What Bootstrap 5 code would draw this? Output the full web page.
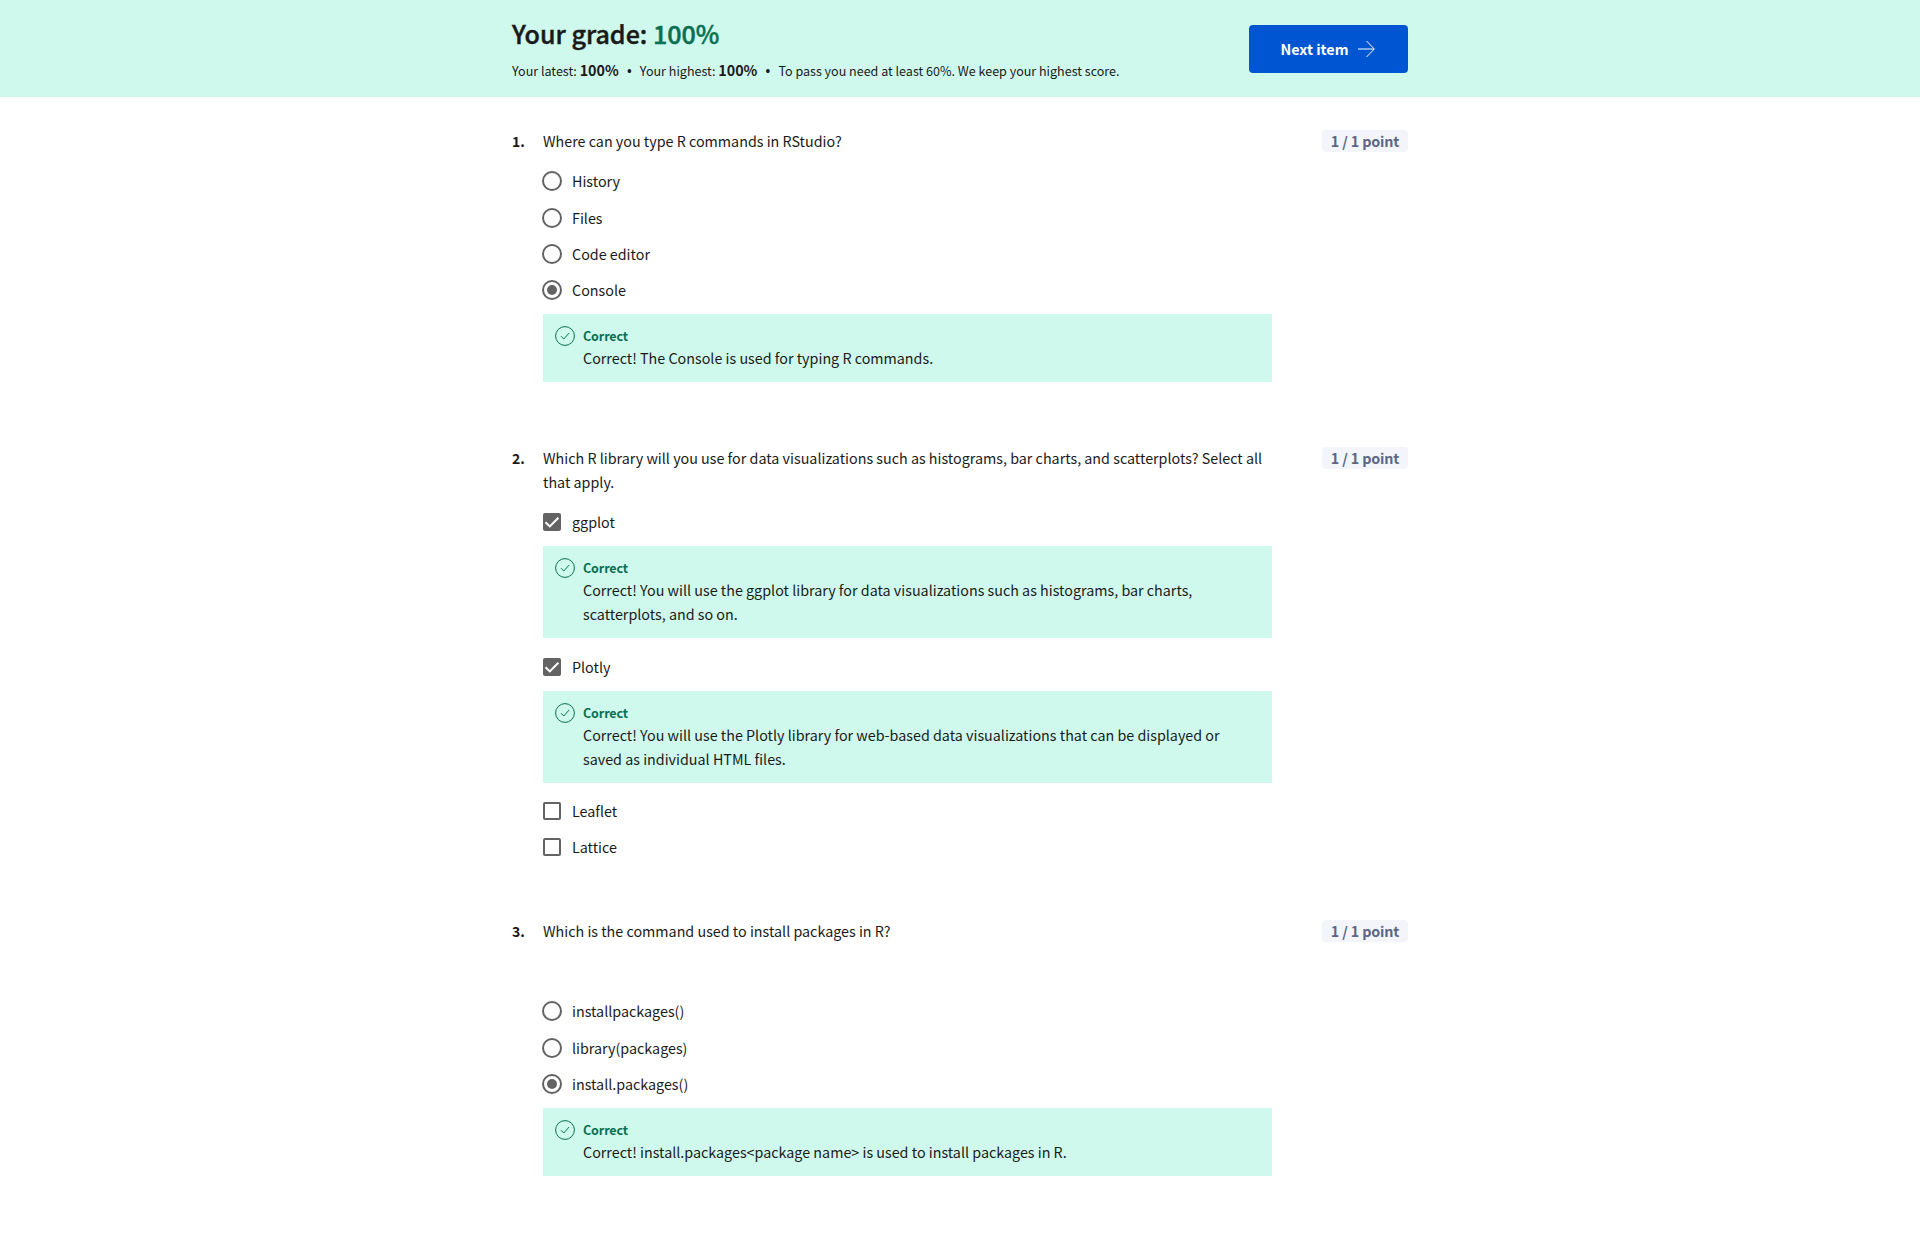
<!DOCTYPE html>
<html lang="en">
<head>
<meta charset="utf-8">
<meta name="viewport" content="width=device-width, initial-scale=1">
<title>Quiz results</title>
<link href="https://cdn.jsdelivr.net/npm/bootstrap@5.3.0/dist/css/bootstrap.min.css" rel="stylesheet">
<style>
  body { font-family: "Noto Sans CJK SC", "Noto Sans", sans-serif; font-size: 14.325px; line-height: 24px; color: #1a1a1a; background: #fff; }
  .quiz-wrap { width: 896px; }
  .grade-bar { background: #d0f9ed; height: 97px; padding-top: 1px; }
  .grade-title { font-size: 25.07px; line-height: 32px; font-weight: 500; -webkit-text-stroke: .45px currentColor; margin: 2px 0 9px; }
  .grade-sub { font-size: 12.54px; line-height: 24px; }
  .grade-sub b { font-size: 14.33px; }
  .sub-dot { width: 21px; font-family: "Open Sans", sans-serif; text-align: center; font-weight: 700; }
  .ok-text { color: #087051; }
  .btn-next { --bs-btn-bg: #0056d2; --bs-btn-color: #fff; --bs-btn-border-width: 0; --bs-btn-border-radius: 4px; width: 159px; height: 48px; font-size: 14.33px; font-weight: 700; }
  .question { margin-bottom: 54px; }
  .q-num { width: 31px; font-weight: 700; font-size: 14px; }
  .q-body { width: 729px; }
  .q-prompt { margin-bottom: 10px; }
  .q-prompt.spaced { margin-bottom: 50px; }
  .points { background: #f3f5fb; color: #5b6785; height: 22px; width: 86px; margin-top: 1px; border-radius: 4px; font-weight: 700; line-height: 22px; letter-spacing: -.15px; }
  .choice { height: 36px; }
  .choice svg { margin-left: -2px; margin-right: 9px; }
  .choice.roomy { margin-bottom: 1px; }
  .feedback { background: #d0f9ed; margin: 6px 0 10px; padding: 12px 40px 12px 12px; }
  .feedback.roomy { margin-bottom: 11px; }
  .feedback svg { margin-right: 8px; }
  .feedback-head { font-size: 12.54px; line-height: 20px; font-weight: 700; letter-spacing: -.12px; color: #087051; }
</style>
<script src="https://cdn.jsdelivr.net/npm/bootstrap@5.3.0/dist/js/bootstrap.bundle.min.js"></script>
</head>
<body>
<svg class="d-none" xmlns="http://www.w3.org/2000/svg">
  <symbol id="radio-off" viewBox="0 0 22 22"><circle cx="11" cy="11" r="9" fill="none" stroke="#636363" stroke-width="2"/></symbol>
  <symbol id="radio-on" viewBox="0 0 22 22"><circle cx="11" cy="11" r="9" fill="none" stroke="#636363" stroke-width="2"/><circle cx="11" cy="11" r="5" fill="#636363"/></symbol>
  <symbol id="box-off" viewBox="0 0 22 22"><rect x="3" y="3" width="16" height="16" rx="1" fill="none" stroke="#636363" stroke-width="2"/></symbol>
  <symbol id="box-on" viewBox="0 0 22 22"><rect x="2" y="2" width="18" height="18" rx="2" fill="#636363"/><path d="M4.5 11.2 8.8 15.4 17.4 6.8" fill="none" stroke="#fff" stroke-width="2"/></symbol>
  <symbol id="tick" viewBox="0 0 20 20"><circle cx="10" cy="10" r="9.4" fill="none" stroke="#087051" stroke-width="1"/><path d="M6 10.2 8.8 13 14.1 7" fill="none" stroke="#087051" stroke-width="1"/></symbol>
</svg>

<header class="grade-bar">
  <div class="quiz-wrap mx-auto d-flex justify-content-between align-items-center h-100">
    <div>
      <h1 class="grade-title">Your grade: <span class="ok-text">100%</span></h1>
      <div class="grade-sub d-flex align-items-baseline"><span>Your latest: <b>100%</b></span><span class="sub-dot">•</span><span>Your highest: <b>100%</b></span><span class="sub-dot">•</span><span>To pass you need at least 60%. We keep your highest score.</span></div>
    </div>
    <button type="button" class="btn btn-next d-flex align-items-center justify-content-center">Next item
      <svg class="ms-2" width="20" height="20" viewBox="0 0 20 20" fill="none" stroke="#fff"><path d="M2 10H18M10.5 2 18.3 10 10.5 18"/></svg>
    </button>
  </div>
</header>

<main class="quiz-wrap mx-auto pt-2">
  <section class="question d-flex mt-4">
    <div class="q-num">1.</div>
    <div class="q-body">
      <div class="q-prompt">Where can you type R commands in RStudio?</div>
      <div class="choice roomy d-flex align-items-center"><svg width="22" height="22"><use href="#radio-off"/></svg><span>History</span></div>
      <div class="choice d-flex align-items-center"><svg width="22" height="22"><use href="#radio-off"/></svg><span>Files</span></div>
      <div class="choice d-flex align-items-center"><svg width="22" height="22"><use href="#radio-off"/></svg><span>Code editor</span></div>
      <div class="choice d-flex align-items-center"><svg width="22" height="22"><use href="#radio-on"/></svg><span>Console</span></div>
      <div class="feedback d-flex align-items-start"><svg class="flex-shrink-0" width="20" height="20"><use href="#tick"/></svg>
        <div><div class="feedback-head">Correct</div><div>Correct! The Console is used for typing R commands.</div></div></div>
    </div>
    <div class="points ms-auto text-center">1 / 1 point</div>
  </section>

  <section class="question d-flex">
    <div class="q-num">2.</div>
    <div class="q-body">
      <div class="q-prompt">Which R library will you use for data visualizations such as histograms, bar charts, and scatterplots? Select all<br>that apply.</div>
      <div class="choice d-flex align-items-center"><svg width="22" height="22"><use href="#box-on"/></svg><span>ggplot</span></div>
      <div class="feedback roomy d-flex align-items-start"><svg class="flex-shrink-0" width="20" height="20"><use href="#tick"/></svg>
        <div><div class="feedback-head">Correct</div><div>Correct! You will use the ggplot library for data visualizations such as histograms, bar charts,<br>scatterplots, and so on.</div></div></div>
      <div class="choice d-flex align-items-center"><svg width="22" height="22"><use href="#box-on"/></svg><span>Plotly</span></div>
      <div class="feedback d-flex align-items-start"><svg class="flex-shrink-0" width="20" height="20"><use href="#tick"/></svg>
        <div><div class="feedback-head">Correct</div><div>Correct! You will use the Plotly library for web-based data visualizations that can be displayed or<br>saved as individual HTML files.</div></div></div>
      <div class="choice d-flex align-items-center"><svg width="22" height="22"><use href="#box-off"/></svg><span>Leaflet</span></div>
      <div class="choice d-flex align-items-center"><svg width="22" height="22"><use href="#box-off"/></svg><span>Lattice</span></div>
    </div>
    <div class="points ms-auto text-center">1 / 1 point</div>
  </section>

  <section class="question d-flex">
    <div class="q-num">3.</div>
    <div class="q-body">
      <div class="q-prompt spaced">Which is the command used to install packages in R?</div>
      <div class="choice roomy d-flex align-items-center"><svg width="22" height="22"><use href="#radio-off"/></svg><span>installpackages()</span></div>
      <div class="choice d-flex align-items-center"><svg width="22" height="22"><use href="#radio-off"/></svg><span>library(packages)</span></div>
      <div class="choice d-flex align-items-center"><svg width="22" height="22"><use href="#radio-on"/></svg><span>install.packages()</span></div>
      <div class="feedback d-flex align-items-start"><svg class="flex-shrink-0" width="20" height="20"><use href="#tick"/></svg>
        <div><div class="feedback-head">Correct</div><div>Correct! install.packages&lt;package name&gt; is used to install packages in R.</div></div></div>
    </div>
    <div class="points ms-auto text-center">1 / 1 point</div>
  </section>
</main>
</body>
</html>
